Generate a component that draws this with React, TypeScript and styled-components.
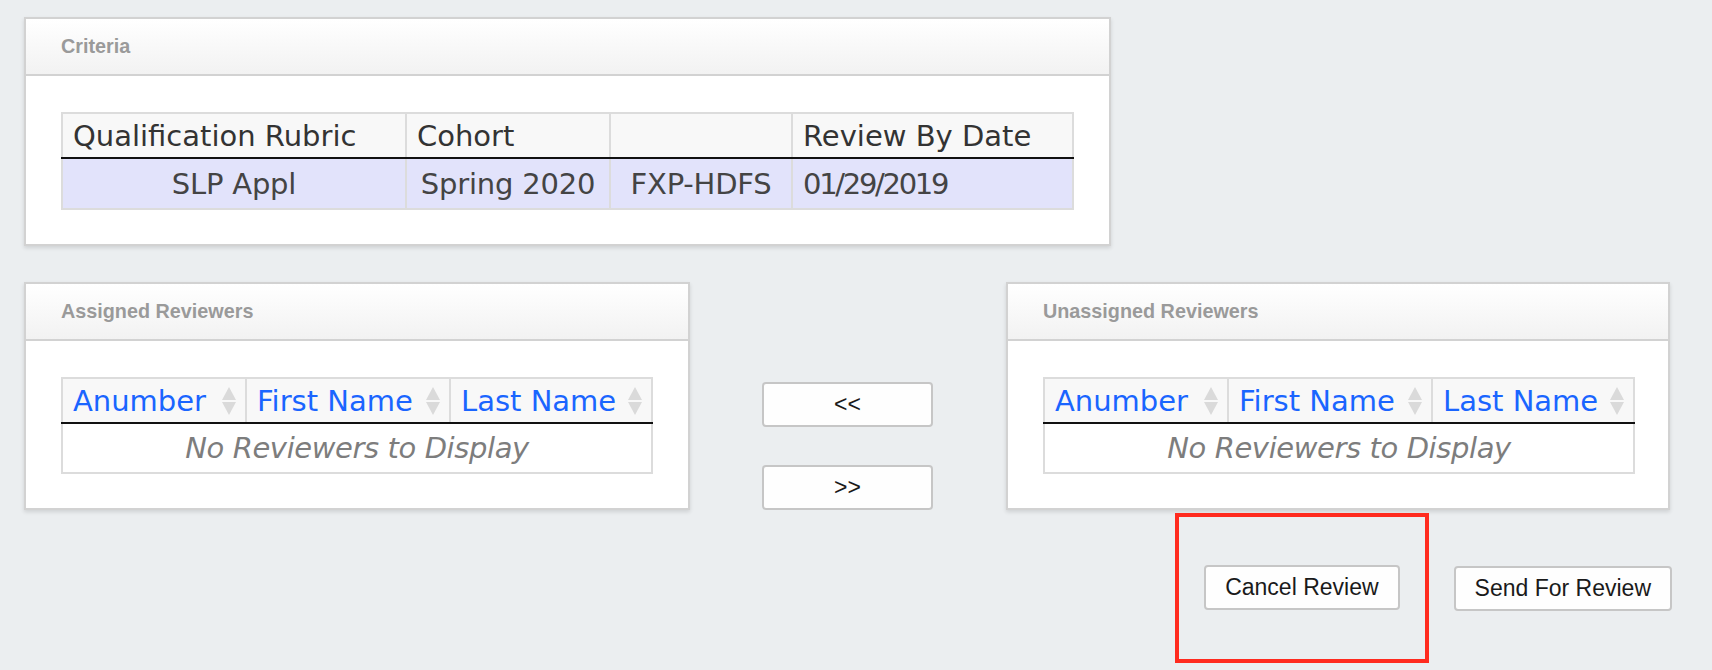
import React from "react";
import styled, { createGlobalStyle } from "styled-components";

const GlobalStyle = createGlobalStyle`
  html, body {
    margin: 0;
    padding: 0;
    background: #ebeef0;
  }
  body {
    font-family: "Liberation Sans", Arial, sans-serif;
  }
`;

const Page = styled.div`
  padding: 17px 0 0 24px;
  width: 1648px;
`;

const Panel = styled.section<{ $width: number }>`
  width: ${(p) => p.$width}px;
  box-sizing: border-box;
  background: #ffffff;
  border: 2px solid #d2d2d2;
  box-shadow: 0 2px 4px rgba(0, 0, 0, 0.12);
`;

const PanelHeader = styled.header`
  height: 55px;
  display: flex;
  align-items: center;
  padding-left: 35px;
  background: linear-gradient(to bottom, #ffffff, #f2f2f2);
  border-bottom: 2px solid #d2d2d2;
  font-family: "Liberation Sans", Arial, sans-serif;
  font-weight: bold;
  font-size: 19.8px;
  color: #9a9a9a;
`;

const PanelBody = styled.div`
  padding: 36px 38px 34px 35px;
`;

const Table = styled.table<{ $width: number }>`
  width: ${(p) => p.$width}px;
  table-layout: fixed;
  border-collapse: collapse;
  border: 2px solid #dcdcdc;
  font-family: "DejaVu Sans", Verdana, sans-serif;
  font-size: 29px;
`;

const Th = styled.th<{ $sortable?: boolean }>`
  position: relative;
  height: 43px;
  padding: 0 ${(p) => (p.$sortable ? "28px" : "8px")} 0 10px;
  text-align: left;
  font-weight: normal;
  color: ${(p) => (p.$sortable ? "#1a65ff" : "#333333")};
  background: #f8f8f8;
  border-left: 2px solid #dcdcdc;
  border-right: 2px solid #dcdcdc;
  border-bottom: 2px solid #111111;
  white-space: nowrap;
  overflow: hidden;
`;

const Td = styled.td<{ $align?: string; $numeric?: boolean }>`
  height: 49px;
  padding: 0 10px;
  text-align: ${(p) => p.$align || "center"};
  color: #444444;
  background: #e2e3fb;
  border: 2px solid #dcdcdc;
  letter-spacing: ${(p) => (p.$numeric ? "-2.3px" : "-0.2px")};
  white-space: nowrap;
`;

const EmptyCell = styled.td`
  height: 46px;
  text-align: center;
  font-style: italic;
  color: #7d7d7d;
  background: #ffffff;
  letter-spacing: -0.4px;
`;

const SortIcon = styled.svg`
  position: absolute;
  right: 9px;
  top: 50%;
  margin-top: -14px;
  width: 14px;
  height: 28px;
`;

const Row = styled.div`
  display: flex;
  align-items: flex-start;
  margin-top: 36px;
`;

const MoveColumn = styled.div`
  display: flex;
  flex-direction: column;
  gap: 38px;
  margin: 100px 73px 0 72px;
`;

const Button = styled.button<{ $width?: number }>`
  box-sizing: border-box;
  height: 45px;
  ${(p) => (p.$width ? `width: ${p.$width}px;` : "padding: 0 19px;")}
  background: #fefefe;
  border: 2px solid #c6c6c6;
  border-radius: 4px;
  font-family: "Liberation Sans", Arial, sans-serif;
  font-size: 23px;
  color: #1a1a1a;
  cursor: pointer;
`;

const ActionRow = styled.div`
  display: flex;
  justify-content: flex-end;
  align-items: center;
  gap: 25px;
  margin-top: 3px;
`;

const Highlight = styled.div`
  border: 4px solid #ff2b1f;
  padding: 48px 25px 49px 25px;
`;

const Sort = () => (
  <SortIcon viewBox="0 0 14 28">
    <polygon points="7,0 14,13 0,13" fill="#dadada" />
    <polygon points="0,15 14,15 7,28" fill="#dadada" />
  </SortIcon>
);

const ReviewerTable = () => (
  <Table $width={590}>
    <colgroup>
      <col style={{ width: 184 }} />
      <col style={{ width: 204 }} />
      <col style={{ width: 202 }} />
    </colgroup>
    <thead>
      <tr>
        <Th $sortable>
          Anumber
          <Sort />
        </Th>
        <Th $sortable>
          First Name
          <Sort />
        </Th>
        <Th $sortable>
          Last Name
          <Sort />
        </Th>
      </tr>
    </thead>
    <tbody>
      <tr>
        <EmptyCell colSpan={3}>No Reviewers to Display</EmptyCell>
      </tr>
    </tbody>
  </Table>
);

export default function App() {
  return (
    <>
      <GlobalStyle />
      <Page>
        <Panel $width={1087}>
          <PanelHeader>Criteria</PanelHeader>
          <PanelBody>
            <Table $width={1011}>
              <colgroup>
                <col style={{ width: 344 }} />
                <col style={{ width: 204 }} />
                <col style={{ width: 182 }} />
                <col style={{ width: 281 }} />
              </colgroup>
              <thead>
                <tr>
                  <Th>Qualification Rubric</Th>
                  <Th>Cohort</Th>
                  <Th></Th>
                  <Th>Review By Date</Th>
                </tr>
              </thead>
              <tbody>
                <tr>
                  <Td>SLP Appl</Td>
                  <Td>Spring 2020</Td>
                  <Td>FXP-HDFS</Td>
                  <Td $align="left" $numeric>
                    01/29/2019
                  </Td>
                </tr>
              </tbody>
            </Table>
          </PanelBody>
        </Panel>

        <Row>
          <Panel $width={666}>
            <PanelHeader>Assigned Reviewers</PanelHeader>
            <PanelBody>
              <ReviewerTable />
            </PanelBody>
          </Panel>
          <MoveColumn>
            <Button $width={171}>&lt;&lt;</Button>
            <Button $width={171}>&gt;&gt;</Button>
          </MoveColumn>
          <Panel $width={664}>
            <PanelHeader>Unassigned Reviewers</PanelHeader>
            <PanelBody>
              <ReviewerTable />
            </PanelBody>
          </Panel>
        </Row>

        <ActionRow>
          <Highlight>
            <Button>Cancel Review</Button>
          </Highlight>
          <Button>Send For Review</Button>
        </ActionRow>
      </Page>
    </>
  );
}
